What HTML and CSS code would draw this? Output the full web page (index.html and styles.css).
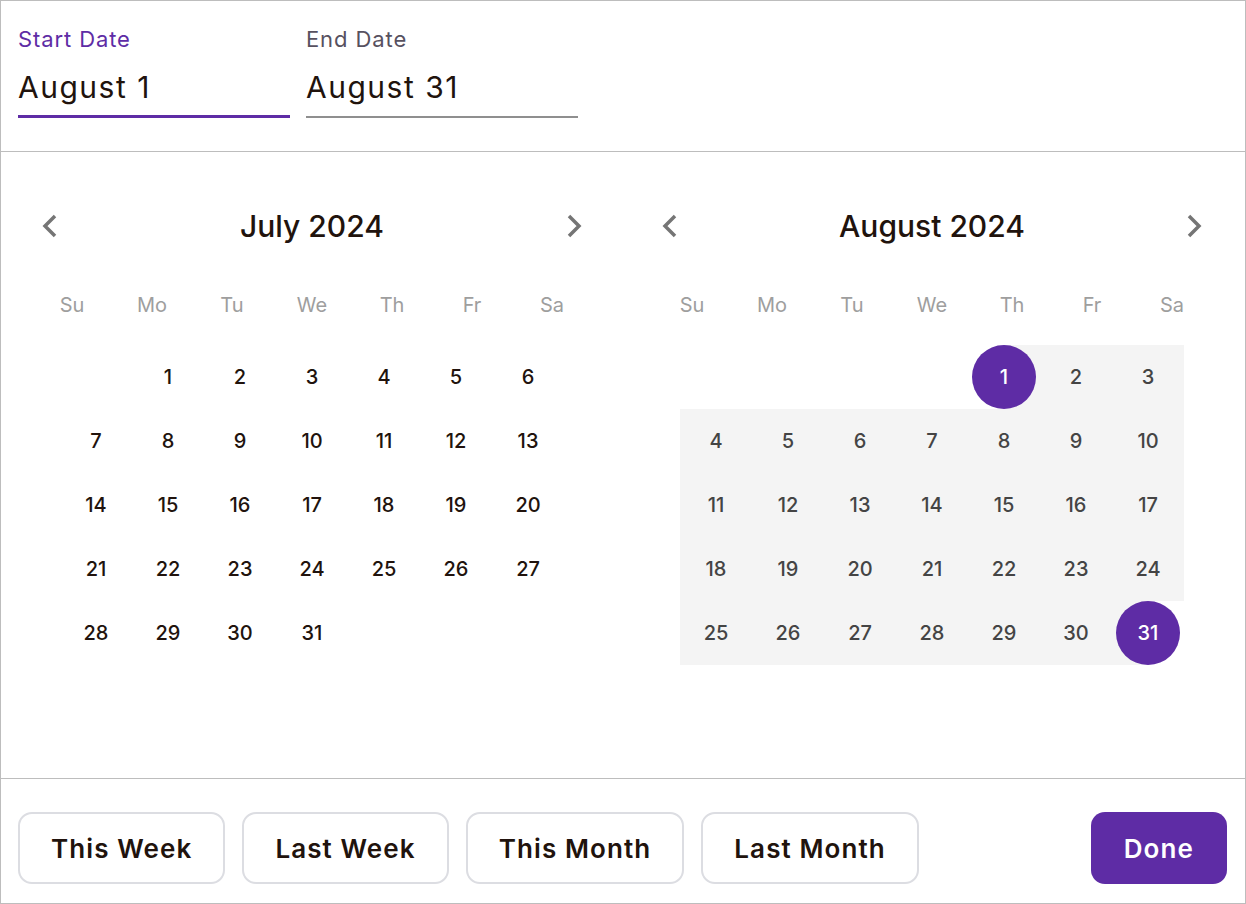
FILE: index.html
```html
<!DOCTYPE html>
<html lang="en">
<head>
    <meta charset="UTF-8">
    <meta name="viewport" content="width=device-width, initial-scale=1.0">
    <title>Date Range Picker</title>
    <link rel="stylesheet" href="styles.css">
</head>
<body>
    <div class="picker">
        <div class="fields">
            <div class="field active">
                <div class="field-label">Start Date</div>
                <div class="field-value">August 1</div>
            </div>
            <div class="field">
                <div class="field-label">End Date</div>
                <div class="field-value">August 31</div>
            </div>
        </div>

        <div class="months">
            <!-- July -->
            <div class="month">
                <div class="month-head">
                    <button class="nav-btn" aria-label="Previous month">
                        <svg width="28" height="28" viewBox="0 0 28 28"><path d="M19 4 9 14l10 10" fill="none" stroke="currentColor" stroke-width="3.5"/></svg>
                    </button>
                    <div class="month-title">July 2024</div>
                    <button class="nav-btn" aria-label="Next month">
                        <svg width="28" height="28" viewBox="0 0 28 28"><path d="M9 4l10 10-10 10" fill="none" stroke="currentColor" stroke-width="3.5"/></svg>
                    </button>
                </div>
                <div class="weekdays">
                    <span>Su</span><span>Mo</span><span>Tu</span><span>We</span><span>Th</span><span>Fr</span><span>Sa</span>
                </div>
                <div class="days">
                    <div class="day empty"></div>
                    <div class="day">1</div><div class="day">2</div><div class="day">3</div><div class="day">4</div><div class="day">5</div><div class="day">6</div>
                    <div class="day">7</div><div class="day">8</div><div class="day">9</div><div class="day">10</div><div class="day">11</div><div class="day">12</div><div class="day">13</div>
                    <div class="day">14</div><div class="day">15</div><div class="day">16</div><div class="day">17</div><div class="day">18</div><div class="day">19</div><div class="day">20</div>
                    <div class="day">21</div><div class="day">22</div><div class="day">23</div><div class="day">24</div><div class="day">25</div><div class="day">26</div><div class="day">27</div>
                    <div class="day">28</div><div class="day">29</div><div class="day">30</div><div class="day">31</div>
                </div>
            </div>

            <!-- August -->
            <div class="month">
                <div class="month-head">
                    <button class="nav-btn" aria-label="Previous month">
                        <svg width="28" height="28" viewBox="0 0 28 28"><path d="M19 4 9 14l10 10" fill="none" stroke="currentColor" stroke-width="3.5"/></svg>
                    </button>
                    <div class="month-title">August 2024</div>
                    <button class="nav-btn" aria-label="Next month">
                        <svg width="28" height="28" viewBox="0 0 28 28"><path d="M9 4l10 10-10 10" fill="none" stroke="currentColor" stroke-width="3.5"/></svg>
                    </button>
                </div>
                <div class="weekdays">
                    <span>Su</span><span>Mo</span><span>Tu</span><span>We</span><span>Th</span><span>Fr</span><span>Sa</span>
                </div>
                <div class="days">
                    <div class="day empty"></div><div class="day empty"></div><div class="day empty"></div><div class="day empty"></div>
                    <div class="day range-start"><span class="dot">1</span></div><div class="day in-range">2</div><div class="day in-range">3</div>
                    <div class="day in-range">4</div><div class="day in-range">5</div><div class="day in-range">6</div><div class="day in-range">7</div><div class="day in-range">8</div><div class="day in-range">9</div><div class="day in-range">10</div>
                    <div class="day in-range">11</div><div class="day in-range">12</div><div class="day in-range">13</div><div class="day in-range">14</div><div class="day in-range">15</div><div class="day in-range">16</div><div class="day in-range">17</div>
                    <div class="day in-range">18</div><div class="day in-range">19</div><div class="day in-range">20</div><div class="day in-range">21</div><div class="day in-range">22</div><div class="day in-range">23</div><div class="day in-range">24</div>
                    <div class="day in-range">25</div><div class="day in-range">26</div><div class="day in-range">27</div><div class="day in-range">28</div><div class="day in-range">29</div><div class="day in-range">30</div>
                    <div class="day range-end"><span class="dot">31</span></div>
                </div>
            </div>
        </div>

        <div class="footer">
            <button class="preset-btn">This Week</button>
            <button class="preset-btn">Last Week</button>
            <button class="preset-btn">This Month</button>
            <button class="preset-btn">Last Month</button>
            <button class="done-btn">Done</button>
        </div>
    </div>
</body>
</html>
```

FILE: styles.css
```css
body {
    font-family: Inter, "Noto Sans", sans-serif;
    background-color: #fff;
    margin: 0;
    color: #21130d;
}

.picker {
    width: 1246px;
    height: 904px;
    border: 1px solid #bdbdbd;
    box-sizing: border-box;
    display: flex;
    flex-direction: column;
}

/* Start / end inputs */
.fields {
    display: flex;
    gap: 16px;
    height: 151px;
    padding: 26px 17px 0;
    border-bottom: 1px solid #bdbdbd;
    box-sizing: border-box;
}

.field {
    width: 272px;
    height: 91px;
    border-bottom: 2px solid #8f8f8f;
    box-sizing: border-box;
}

.field.active {
    border-bottom: 3px solid #5e2ca5;
}

.field-label {
    font-size: 22px;
    line-height: 24px;
    letter-spacing: 0.9px;
    color: #57515f;
}

.field.active .field-label {
    color: #5e2ca5;
}

.field-value {
    margin-top: 18px;
    font-size: 30px;
    line-height: 36px;
    letter-spacing: 1.5px;
    color: #21130d;
}

/* Calendars */
.months {
    flex: 1;
    display: flex;
    gap: 60px;
    padding: 50px 31px 0;
}

.month {
    width: 560px;
}

.month-head {
    height: 48px;
    display: flex;
    align-items: center;
    justify-content: space-between;
}

.nav-btn {
    width: 36px;
    height: 36px;
    border: none;
    background: none;
    padding: 0;
    color: #757575;
    display: flex;
    align-items: center;
    justify-content: center;
    cursor: pointer;
}

.month-title {
    font-size: 30px;
    font-weight: 500;
}

.weekdays {
    display: grid;
    grid-template-columns: repeat(7, 80px);
    margin-top: 35px;
    height: 40px;
    align-items: center;
}

.weekdays span {
    text-align: center;
    font-size: 20px;
    color: #9e9e9e;
}

.days {
    display: grid;
    grid-template-columns: repeat(7, 72px);
    grid-auto-rows: 64px;
    margin: 20px 28px 0;
}

.day {
    display: flex;
    align-items: center;
    justify-content: center;
    font-size: 20px;
    font-weight: 500;
    color: #21130d;
}

.day.in-range {
    background-color: #f4f4f4;
    color: #444;
}

.day.range-start {
    background: linear-gradient(to right, transparent 50%, #f4f4f4 50%);
}

.day.range-end {
    background: linear-gradient(to right, #f4f4f4 50%, transparent 50%);
}

.dot {
    width: 64px;
    height: 64px;
    border-radius: 50%;
    background-color: #5e2ca5;
    color: #fff;
    display: flex;
    align-items: center;
    justify-content: center;
}

/* Footer buttons */
.footer {
    height: 125px;
    border-top: 1px solid #bdbdbd;
    box-sizing: border-box;
    display: flex;
    align-items: flex-start;
    gap: 17px;
    padding: 33px 18px 0 17px;
}

.preset-btn,
.done-btn {
    height: 72px;
    padding: 0 31px;
    border-radius: 14px;
    font-family: inherit;
    font-size: 26px;
    font-weight: 600;
    letter-spacing: 1.1px;
    cursor: pointer;
}

.preset-btn {
    background-color: #fff;
    border: 2px solid #dcdde2;
    color: #21130d;
}

.done-btn {
    margin-left: auto;
    background-color: #5e2ca5;
    border: none;
    color: #fff;
    padding: 0 33px;
}
```
